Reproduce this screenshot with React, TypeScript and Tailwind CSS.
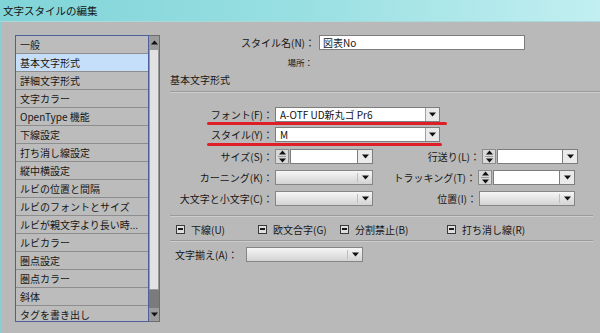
import React from "react";

const items = [
  "一般",
  "基本文字形式",
  "詳細文字形式",
  "文字カラー",
  "OpenType 機能",
  "下線設定",
  "打ち消し線設定",
  "縦中横設定",
  "ルビの位置と間隔",
  "ルビのフォントとサイズ",
  "ルビが親文字より長い時...",
  "ルビカラー",
  "圏点設定",
  "圏点カラー",
  "斜体",
  "タグを書き出し",
];

function Down() {
  return (
    <svg width="7" height="5" viewBox="0 0 7 5">
      <path d="M0 0.5H7L3.5 4.5Z" fill="#111" />
    </svg>
  );
}

function Up() {
  return (
    <svg width="7" height="5" viewBox="0 0 7 5">
      <path d="M0 4.5H7L3.5 0.5Z" fill="#111" />
    </svg>
  );
}

function Select({ value, className }: { value?: string; className: string }) {
  return (
    <div className={`flex h-[15px] border border-[#7d7d7d] bg-white ${className}`}>
      <div className="flex-1 pl-[4px] text-[10px] leading-[13px] text-[#111]">{value}</div>
      <div className="flex w-[14px] items-center justify-center border-l border-[#a0a0a0] bg-[#eaeaea]">
        <Down />
      </div>
    </div>
  );
}

function Disabled({ className }: { className: string }) {
  return (
    <div className={`flex h-[15px] border border-[#858585] bg-gradient-to-b from-[#f6f6f6] to-[#d3d3d3] ${className}`}>
      <div className="flex-1" />
      <div className="my-[2px] w-px bg-[#bdbdbd]" />
      <div className="flex w-[14px] items-center justify-center">
        <Down />
      </div>
    </div>
  );
}

function Spin({ className }: { className: string }) {
  return (
    <div className={`flex h-[15px] ${className}`}>
      <div className="mr-[1px] flex w-[14px] flex-col items-center justify-center gap-[1px] border border-[#8c8c8c] bg-[#d9d9d9]">
        <Up />
        <div className="h-px w-[8px] bg-[#9a9a9a]" />
        <Down />
      </div>
      <div className="flex-1 border border-[#7d7d7d] bg-white" />
      <div className="flex w-[15px] items-center justify-center border border-l-0 border-[#7d7d7d] bg-[#eaeaea]">
        <Down />
      </div>
    </div>
  );
}

function Check({ label, className }: { label: string; className: string }) {
  return (
    <div className={`flex items-center ${className}`}>
      <div className="flex h-[9px] w-[9px] items-center justify-center border border-[#3a3a3a] bg-[#dedede]">
        <div className="h-[2px] w-[5px] bg-[#1a1a1a]" />
      </div>
      <span className="ml-[6px]">{label}</span>
    </div>
  );
}

function Label({ text, className }: { text: string; className: string }) {
  return <div className={`shrink-0 pr-[2px] text-right ${className}`}>{text}</div>;
}

export default function App() {
  return (
    <div className="h-[333px] w-[600px] overflow-hidden bg-[#b9b9b9] font-['Noto_Sans_CJK_JP','Noto_Sans',sans-serif] text-[10px] leading-[13px] text-[#161616]">
      {/* title bar */}
      <div className="flex h-[22px] items-center border-b border-[#a9d9dc] bg-gradient-to-r from-[#80d4d8] via-[#98dfe2] to-[#c2eff1] pl-[3px] text-[10.5px] text-[#151515]">
        文字スタイルの編集
      </div>

      <div className="flex h-[311px] border-l-2 border-[#86d0d4]">
        {/* category list */}
        <div className="ml-[13px] mt-[13px] flex h-[287px] w-[145px]">
          <div className="flex-1 border border-[#4f5f9c] bg-[#bcbcbc]">
            {items.map((it, i) => (
              <div
                key={it}
                className={`h-[18px] border-b border-[#8d8d8d] pl-[4px] leading-[17px] last:border-b-0 ${
                  i === 1 ? "bg-[#c5dffa]" : ""
                }`}
              >
                {it}
              </div>
            ))}
          </div>
          <div className="flex w-[11px] flex-col border border-l-0 border-[#6d6d6d] bg-[#7b7b7b]">
            <div className="flex h-[13px] items-center justify-center bg-[#9c9c9c]">
              <Up />
            </div>
            <div className="h-[241px] border border-[#9a9a9a] bg-[#e2e2e2]" />
            <div className="flex-1" />
            <div className="flex h-[13px] items-center justify-center bg-[#9c9c9c]">
              <Down />
            </div>
          </div>
        </div>

        {/* right panel */}
        <div className="ml-[10px] flex flex-1 flex-col pt-[13px]">
          <div className="flex h-[15px] items-center">
            <Label text="スタイル名(N)：" className="w-[147px]" />
            <div className="ml-[2px] h-[15px] w-[206px] border border-[#7d7d7d] bg-white pl-[3px] leading-[13px]">
              図表No
            </div>
          </div>
          <div className="mt-[6px] flex h-[12px] items-center">
            <Label text="場所：" className="w-[145px] text-[8.5px]" />
          </div>
          <div className="mt-[6px] h-[12px] leading-[12px]">基本文字形式</div>
          <div className="mt-[5px] h-[2px] border-t border-b border-[#9b9b9b] border-b-[#cdcdcd]" />

          <div className="relative mt-[14px] flex h-[15px] items-center">
            <Label text="フォント(F)：" className="w-[105px]" />
            <Select value="A-OTF UD新丸ゴ Pr6" className="w-[165px]" />
            <div className="absolute left-[37px] top-[15px] h-[3px] w-[240px] rounded-full bg-[#e01e28]" />
          </div>
          <div className="relative mt-[5px] flex h-[15px] items-center">
            <Label text="スタイル(Y)：" className="w-[105px]" />
            <Select value="M" className="w-[165px]" />
            <div className="absolute left-[37px] top-[16px] h-[3px] w-[235px] rounded-full bg-[#e01e28]" />
          </div>

          <div className="mt-[7px] flex h-[15px] items-center">
            <Label text="サイズ(S)：" className="w-[105px]" />
            <Spin className="w-[98px]" />
            <Label text="行送り(L)：" className="w-[109px]" />
            <Spin className="w-[96px]" />
          </div>
          <div className="mt-[6px] flex h-[15px] items-center">
            <Label text="カーニング(K)：" className="w-[105px]" />
            <Disabled className="w-[98px]" />
            <Label text="トラッキング(T)：" className="w-[105px]" />
            <Spin className="w-[97px]" />
          </div>
          <div className="mt-[6px] flex h-[15px] items-center">
            <Label text="大文字と小文字(C)：" className="w-[105px]" />
            <Disabled className="w-[98px]" />
            <Label text="位置(I)：" className="w-[106px]" />
            <Disabled className="w-[96px]" />
          </div>

          <div className="mr-[7px] mt-[9px] h-[2px] border-t border-b border-[#9b9b9b] border-b-[#cdcdcd]" />
          <div className="mt-[5px] flex h-[14px] items-center pl-[6px]">
            <Check label="下線(U)" className="w-[82px]" />
            <Check label="欧文合字(G)" className="w-[82px]" />
            <Check label="分割禁止(B)" className="w-[107px]" />
            <Check label="打ち消し線(R)" className="w-[100px]" />
          </div>
          <div className="mr-[7px] mt-[4px] h-[2px] border-t border-b border-[#9b9b9b] border-b-[#cdcdcd]" />

          <div className="mt-[5px] flex h-[15px] items-center pl-[5px]">
            <div className="w-[71px]">文字揃え(A)：</div>
            <Disabled className="w-[117px]" />
          </div>
        </div>
      </div>
    </div>
  );
}
